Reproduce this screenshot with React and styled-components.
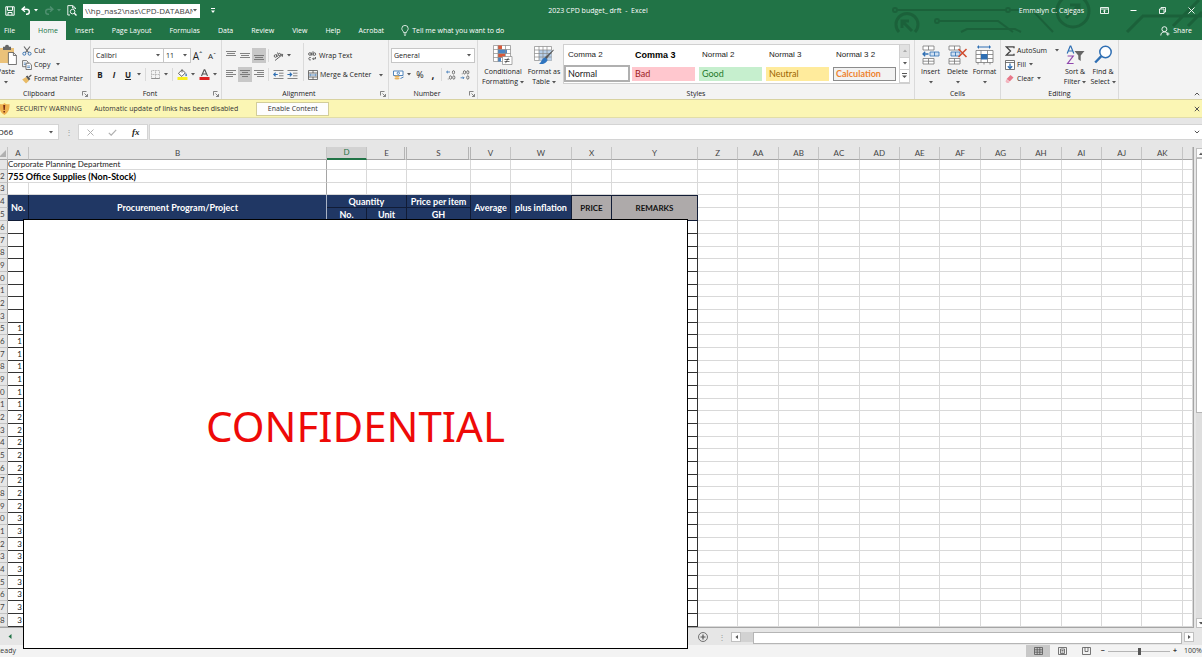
import React from 'react';
import styled, { createGlobalStyle, css } from 'styled-components';

const GlobalStyle = createGlobalStyle`
  * { box-sizing: border-box; }
  body {
    margin: 0;
    overflow: hidden;
    background: #e6e6e6;
    color: #222;
    font: 7px/10px 'Open Sans', 'Noto Sans', sans-serif;
  }
  button, input, select {
    font: inherit;
    color: inherit;
    margin: 0;
    padding: 0;
    border: 0;
    background: none;
    outline: 0;
    border-radius: 0;
  }
  svg { display: block; flex: none; }
`;

/* ---------- icons ---------- */

const Svg = ({ w, h, children, ...rest }) => (
  <svg width={w} height={h} viewBox={`0 0 ${w} ${h}`} fill="none" stroke="#555" aria-hidden="true" {...rest}>
    {children}
  </svg>
);

const Caret = ({ color = '#555' }) => (
  <Svg w={4} h={3} stroke="none">
    <path d="M0 0h4L2 2.6z" fill={color} />
  </Svg>
);

const Launcher = () => (
  <Svg w={6} h={6} strokeWidth=".7">
    <path d="M.5 4.5v-4h4M2.5 2.5l2.8 2.8M5.500 3v2.500H3" />
  </Svg>
);

const SaveIcon = () => (
  <Svg w={10} h={10} stroke="#fff">
    <path d="M.8.8h8.400v8.400H.8zM2.500 1v3.400h5V1M3 9V6.500h4V9" />
  </Svg>
);

const UndoIcon = ({ color = '#fff', flip }) => (
  <Svg w={10} h={9} stroke={color} strokeWidth="1.4" transform={flip ? 'scale(-1 1)' : undefined}>
    <path d="M4 .6L1 3.2l3 2.6M1.2 3.2h4.6a2.5 2.5 0 010 5H5" />
  </Svg>
);

const PreviewIcon = () => (
  <Svg w={10} h={11} stroke="#fff" strokeWidth=".9">
    <path d="M3 10H.8V.6h5L8.5 3v1M5.6.8V3h2.6" />
    <circle cx="5.6" cy="6.6" r="2.3" />
    <path d="M7.3 8.3l2.2 2.2" strokeWidth="1.3" />
  </Svg>
);

const BulbIcon = () => (
  <Svg w={8} h={11} stroke="#fff" strokeWidth=".8">
    <path d="M2.6 7.6C2.6 6 .8 5.6.8 3.6a3.2 3.2 0 016.4 0c0 2-1.8 2.4-1.8 4zM2.8 9h2.4M3.2 10.3h1.6" />
  </Svg>
);

const ShareIcon = () => (
  <Svg w={10} h={10} stroke="#fff" strokeWidth=".9">
    <circle cx="4.4" cy="3.2" r="2.5" />
    <path d="M.8 9.5c0-2.4 1.4-3.6 3.6-3.6 1 0 1.8.3 2.4.8M7.8 6.3v3.4M6.1 8h3.4" />
  </Svg>
);

const PasteIcon = () => (
  <Svg w={18} h={20} strokeWidth=".8">
    <path d="M0 3h14v15H0z" fill="#ebc27a" stroke="none" />
    <path d="M3 1.8h2a2 2 0 014 0h2V5H3z" fill="#666" stroke="none" />
    <path d="M8.4 7.5h5l3 3v9h-8z" fill="#fff" />
    <path d="M13.4 7.5v3h3" />
  </Svg>
);

const CutIcon = () => (
  <Svg w={10} h={10}>
    <path d="M2 .5l4.8 6.3M8 .5L3.2 6.8" stroke="#666" strokeWidth="1.1" />
    <circle cx="2.3" cy="7.7" r="1.5" stroke="#3f78b5" />
    <circle cx="7.6" cy="7.7" r="1.5" stroke="#3f78b5" />
  </Svg>
);

const CopyIcon = () => (
  <Svg w={10} h={10} strokeWidth=".8">
    <path d="M.6.6h4l1.4 1.5v4.6H.6z" fill="#fff" />
    <path d="M1.8 3h2M1.8 4.6h2" stroke="#3f78b5" />
    <path d="M4 3.2h3.6l1.8 1.6v4.7H4z" fill="#fff" />
    <path d="M5.2 6h2.8M5.2 7.6h2.8" stroke="#3f78b5" />
  </Svg>
);

const PainterIcon = () => (
  <Svg w={10} h={10} stroke="none">
    <path d="M.2 5.4L4 3l3 3.8-3 2.8z" fill="#e9bb66" />
    <path d="M3.8 2.6l1.6-1.2 3 3.6L6.8 6.4z" fill="#555" />
    <path d="M6.6 2.4L9 .4l.8.9-2.2 2.2z" fill="#555" />
  </Svg>
);

const BordersIcon = () => (
  <Svg w={9} h={9} stroke="#aaa" strokeWidth=".9">
    <path d="M.5.5h8v8h-8zM4.5.5v8M.5 4.5h8" strokeDasharray="1 .6" />
    <path d="M.3 8.5h8.4" stroke="#888" />
  </Svg>
);

const BucketIcon = () => (
  <Svg w={11} h={11} strokeWidth=".9">
    <path d="M5 .8L1.4 4.4l3.4 3 3.6-3.6zM5 .5v3" fill="#fff" />
    <path d="M9 4c.8 1.4 1.2 2 .8 2.7-.4.7-1.4.5-1.5-.3C8.2 5.7 9 4 9 4z" fill="#3f78b5" stroke="none" />
    <path d="M.5 8h10v3H.5z" fill="#f8ef1c" stroke="none" />
  </Svg>
);

const AlignIcon = ({ rows }) => (
  <Svg w={10} h={11} stroke="#666" strokeWidth=".8">
    {rows.map(([x1, x2, y]) => (
      <path key={y} d={`M${x1} ${y}H${x2}`} />
    ))}
  </Svg>
);

const OrientIcon = () => (
  <Svg w={11} h={10} strokeWidth=".9">
    <circle cx="2.5" cy="5" r="1.3" />
    <path d="M3.6 3.3l.8 2.8M4.5 1.5l1.4 3.4a1.3 1.3 0 10-.4-2.4M2 9.5l7.5-6M7.2 3.2l2.5.2-.5 2.5" />
  </Svg>
);

const IndentIcon = ({ right }) => (
  <Svg w={11} h={9} stroke="#777" strokeWidth=".9">
    <path d="M.5.5h10M6 3.200h4.500M6 5.800h4.500M.5 8.500h10" />
    <path d={right ? 'M.4 4.500h4M2.800 2.700l1.800 1.800-1.800 1.800' : 'M.8 4.500h4M2.600 2.700L.8 4.500l1.800 1.800'} stroke="#2f6fb3" strokeWidth="1.2" />
  </Svg>
);

const WrapIcon = () => (
  <Svg w={9} h={10} strokeWidth=".9">
    <circle cx="1.9" cy="3" r="1.3" />
    <path d="M3.4 1.5v3M5 .3v4.2" />
    <circle cx="6.4" cy="3.1" r="1.3" />
    <path d="M2.8 6.6a1.3 1.3 0 100 2.2M7.500 6v1.800H4.800M5.800 6.600L4.600 7.800l1.200 1.200" />
  </Svg>
);

const MergeIcon = () => (
  <Svg w={10} h={10} strokeWidth=".8">
    <path d="M.5.5h9v9h-9zM.5 3h9M.5 7h9M5 .5V3M5 7v2.5" />
    <path d="M1.6 5h6.8M2.8 4L1.6 5l1.2 1M7.2 4l1.2 1-1.2 1" stroke="#3f78b5" />
  </Svg>
);

const CurrencyIcon = () => (
  <Svg w={11} h={10} strokeWidth=".9">
    <path d="M.5 1h9.500v4.500H.5z" fill="#fff" stroke="#3f78b5" />
    <circle cx="5.3" cy="3.2" r="1.2" stroke="#3f78b5" />
    <ellipse cx="4" cy="6.4" rx="2.6" ry="1" fill="#ebb35b" stroke="none" />
    <ellipse cx="4" cy="8.5" rx="2.6" ry="1" fill="#ebb35b" stroke="none" />
    <path d="M10.5 7l-3 1.500" stroke="#3f78b5" />
  </Svg>
);

const DecimalIcon = ({ more }) => (
  <Svg w={10} h={10} strokeWidth=".8">
    {more ? (
      <path d="M4 2H.6M1.9.8L.6 2l1.3 1.200" stroke="#2f6fb3" />
    ) : (
      <path d="M.6 7.8H4M2.8 6.6L4 7.8 2.8 9" stroke="#2f6fb3" />
    )}
    <ellipse cx={more ? 7.5 : 4.5} cy="2.3" rx="1.1" ry="1.7" />
    <ellipse cx={more ? 4.5 : 7.8} cy={more ? 7.5 : 2.3} rx="1.1" ry="1.7" />
    <ellipse cx="7.8" cy="7.5" rx="1.1" ry="1.7" />
    <path d={more ? 'M1.8 9h.8' : 'M1.8 3.800h.8'} />
  </Svg>
);

const CondIcon = () => (
  <Svg w={20} h={20} strokeWidth=".7" stroke="#888">
    <path d="M.5.5h17v16H.5z" fill="#fff" />
    <path d="M5 .5h4v4H5zM5 8.500h7v4H5z" fill="#d8593a" stroke="none" />
    <path d="M5 4.500h9v4H5zM5 12.500h3v4H5z" fill="#4a86c5" stroke="none" />
    <path d="M.5 4.500h17M.5 8.500h17M.5 12.500h17M5 .5v16M12.500.5v16" />
    <path d="M9.500 11.500h9.500v8H9.500z" fill="#fff" />
    <path d="M11.500 14.500h5M11.500 16.500h5M15.500 12.800l-3 5.400" stroke="#333" />
  </Svg>
);

const TableIcon = () => (
  <Svg w={20} h={20} strokeWidth=".7" stroke="#888">
    <path d="M.5 1.500h17v14H.5z" fill="#fff" />
    <path d="M5 5h12.500v10.500H5z" fill="#b7d0ea" stroke="none" />
    <path d="M.5 5h17M.5 8.500h17M.5 12h17M5 1.500v14M9 1.500v14M13 1.500v14" />
    <path d="M19.500 5l-7.500 9-1-1.500z" fill="#555" stroke="#555" />
    <path d="M11.500 12.500l2 2.500c-1.500 4-5 4.200-8.500 4 2.500-1.500 2.500-6 6.500-6.500z" fill="#2f74bf" stroke="none" />
  </Svg>
);

const InsertIcon = () => (
  <Svg w={18} h={19} strokeWidth=".8" stroke="#777">
    <path d="M1 .5h11v4H1zM6.500.5v4M1 13h11v5.500H1zM6.500 13v5.500M1 15.700h11" fill="#fff" />
    <path d="M8 6.500h9v4H8zM12.500 6.500v4" fill="#cfe0f2" stroke="#2f6fb3" />
    <path d="M6.500 8.500H1M3.200 6.300L1 8.500l2.200 2.200" stroke="#2f6fb3" strokeWidth="1.3" />
  </Svg>
);

const DeleteIcon = () => (
  <Svg w={18} h={19} strokeWidth=".8" stroke="#777">
    <path d="M0 .5h11v4H0zM5.500.5v4M0 13h11v5.500H0zM5.500 13v5.500M0 15.700h11" fill="#fff" />
    <path d="M2 6.500h9v4H2zM6.500 6.500v4" fill="#cfe0f2" stroke="#2f6fb3" />
    <path d="M9.500 3.500l8 8M17.500 3.500l-8 8" stroke="#d04a2c" strokeWidth="1.5" />
  </Svg>
);

const FormatIcon = () => (
  <Svg w={19} h={19} strokeWidth=".8" stroke="#777">
    <path d="M2 1.500h14M3.500 0v3M14.500 0v3" stroke="#2f6fb3" strokeWidth="1" />
    <path d="M1 5h17v12H1zM1 9h17M1 13h17M6 5v12M12.500 5v12" fill="#fff" />
    <path d="M6 8.500h6.500V14H6z" fill="#2f6fb3" stroke="none" />
    <path d="M3 17v2M9 17v2M15 17v2" />
  </Svg>
);

const SigmaIcon = () => (
  <Svg w={10} h={10} stroke="#444" strokeWidth="1.3">
    <path d="M9 2.200V.8H1.200L5.500 5l-4.300 4.200H9V7.800" />
  </Svg>
);

const FillIcon = () => (
  <Svg w={10} h={10} strokeWidth=".8">
    <path d="M.5.5h9v9h-9zM.5 2.500h9" fill="#fff" />
    <path d="M5 3.500v5M2.800 6.200L5 8.500l2.200-2.300" stroke="#2f6fb3" strokeWidth="1.3" />
  </Svg>
);

const EraserIcon = () => (
  <Svg w={10} h={10} stroke="none">
    <path d="M5.500 1l3 2.600-3.700 4L1.600 5z" fill="#e8788a" />
    <path d="M1.400 5.300L4.500 8l-.8.9H1.800L.5 7.500z" fill="#f3b4be" />
  </Svg>
);

const SortIcon = () => (
  <Svg w={19} h={20} strokeWidth="1.2">
    <path d="M1.200 8.500L4.200 1h.6l3 7.500M2.200 6h4.600" stroke="#2f6fb3" />
    <path d="M1.600 11h5.600L1.600 18.500h6" stroke="#9047ad" />
    <path d="M8.500 6h10l-3.800 4.500V16l-2.400-1.800v-3.700z" fill="#666" stroke="none" />
  </Svg>
);

const FindIcon = () => (
  <Svg w={19} h={20} stroke="#2f6fb3">
    <circle cx="11.5" cy="7" r="5.7" strokeWidth="1.5" fill="#fff" />
    <path d="M7.300 11.200L1.200 17.500" strokeWidth="2.4" />
  </Svg>
);

const ShieldIcon = () => (
  <Svg w={10} h={12} stroke="none">
    <path d="M0 1c2 .6 3.500 0 4.500-1C5.500 1 7.500 1.600 9.500 1c.3 5-1 8.500-5 11C1 10 0 8 0 6z" fill="#eeb350" />
    <path d="M3.200 2h2l-.4 5H3.600zM3.400 8h1.600v1.600H3.400z" fill="#7b2d12" />
  </Svg>
);

const Circuit = styled.svg`
  position: absolute;
  top: 0;
  right: 0;
  opacity: 0.75;
`;

const CircuitArt = () => (
  <Circuit width="312" height="33" viewBox="890 0 312 33" fill="none" stroke="#1a5c37" strokeWidth="2" aria-hidden="true">
    <circle cx="895" cy="10" r="2" />
    <path d="M897 10h109M1010 10h22l21 22" />
    <circle cx="1008" cy="10" r="2" />
    <circle cx="937" cy="21" r="2" />
    <path d="M939 21h59l15 11M961 32l6-3h48l6 3" />
    <path d="M899 32a11 11 0 1116 0" strokeWidth="3" />
    <path d="M912 31l-9-9M902 28v-7h7" strokeWidth="3" />
    <circle cx="1073" cy="11" r="16" strokeWidth="3" />
    <path d="M1066 18l13-13M1079 14V5h-9" strokeWidth="3" />
    <path d="M1127 32l16-16h59M1173 26l26-26M1188 26l14-14" strokeWidth="3" />
  </Circuit>
);

/* ---------- title bar and tabs ---------- */

const Page = styled.div`
  min-height: 100vh;
  display: flex;
  flex-direction: column;
  overflow: hidden;
`;

const Header = styled.header`
  position: relative;
  background: #217346;
  color: #fff;
`;

const TitleBar = styled.div`
  position: relative;
  display: grid;
  grid-template-columns: 1fr auto 1fr;
  align-items: center;
  height: 21px;
`;

const QuickAccess = styled.div`
  display: flex;
  align-items: center;
  gap: 6px;
  padding-left: 5px;
`;

const PlainButton = styled.button`
  display: flex;
  align-items: center;
  justify-content: center;
  gap: 3px;
`;

const PathBox = styled.label`
  display: flex;
  align-items: center;
  width: 117px;
  height: 14px;
  padding: 0 3px 0 2px;
  background: #fff;
  color: #444;

  & > input {
    flex: 1;
    min-width: 0;
    font-size: 8px;
  }
`;

const DocTitle = styled.div`
  margin-right: 6px;
  white-space: pre;
`;

const WindowControls = styled.div`
  display: flex;
  justify-content: flex-end;
  align-items: center;
  margin-right: -4px;

  & > button {
    width: 29px;
    height: 20px;
  }
`;

const UserName = styled.span`
  margin-right: 6px;
`;

const TabRow = styled.nav`
  position: relative;
  display: flex;
  height: 19px;
`;

const Tab = styled.button`
  padding: 0 9px;
  ${props =>
    props.$first &&
    css`
      padding: 0 15px 0 4px;
    `};
  ${props =>
    props.$active &&
    css`
      background: #f3f3f3;
      color: #217346;
      padding: 0 8px;
    `};
`;

const TellMe = styled(PlainButton)`
  margin-left: 8px;
`;

const ShareButton = styled(PlainButton)`
  margin-left: auto;
  padding-right: 10px;
`;

/* ---------- ribbon ---------- */

const Ribbon = styled.section`
  position: relative;
  display: flex;
  height: 60px;
  background: #f3f3f3;
  border-bottom: 1px solid #d8d2a0;
`;

const Group = styled.div`
  display: flex;
  flex: none;
  flex-direction: column;
  width: ${props => props.$width}px;
  padding-top: 3px;
  border-right: 1px solid #dadada;
`;

const GroupBody = styled.div`
  display: flex;
  flex: 1;
  padding-left: ${props => props.$pad || 0}px;
  gap: ${props => props.$gap || 0}px;
`;

const GroupLabel = styled.div`
  position: relative;
  height: 11px;
  padding-top: 1px;
  padding-right: ${props => (props.$launcher ? 12 : 0)}px;
  text-align: center;

  & > button {
    position: absolute;
    right: 2px;
    top: 3px;
  }
`;

const Rows = styled.div`
  display: flex;
  flex-direction: column;
  padding-top: 3px;
`;

const ToolRow = styled.div`
  display: flex;
  align-items: center;
  height: 19px;
`;

const Tool = styled.button`
  display: flex;
  align-items: center;
  justify-content: center;
  width: ${props => props.$width || 14}px;
  height: 15px;
  font-size: ${props => props.$size || 8}px;
  ${props => props.$on && 'background: #c8c8c8;'};
`;

const Divider = styled.span`
  width: 1px;
  height: ${props => props.$height || 13}px;
  margin: 0 ${props => props.$space || 2}px;
  background: #dadada;
`;

const Combo = styled.label`
  position: relative;
  display: flex;
  align-items: center;
  width: ${props => props.$width}px;
  height: 15px;
  margin-right: -1px;
  border: 1px solid #c6c6c6;
  background: #fff;

  & > select {
    flex: 1;
    width: 100%;
    padding-left: 2px;
    appearance: none;
  }

  & > svg {
    position: absolute;
    right: 3px;
    pointer-events: none;
  }
`;

const TextTool = styled.button`
  display: flex;
  align-items: center;
  gap: 2px;
  height: ${props => (props.$tall ? 19 : 14)}px;
  padding-top: 1px;
  white-space: nowrap;

  & > svg:last-child:not(:first-child) {
    margin-left: ${props => props.$caretGap || 1}px;
  }
`;

const BigTool = styled.button`
  display: flex;
  flex: none;
  flex-direction: column;
  align-items: center;
  width: ${props => props.$width}px;
  padding-top: 2px;
  white-space: nowrap;

  & > span {
    display: flex;
    align-items: center;
    gap: 2px;
    min-height: 10px;
  }

  & > svg {
    height: 20px;
    margin-bottom: 2px;
    overflow: visible;
  }
`;

const PasteTool = styled(BigTool)`
  align-items: flex-start;

  & > span {
    margin-left: -3px;
  }
  & > span:last-child {
    margin-left: 4px;
  }
`;

const Gallery = styled.div`
  display: grid;
  grid-template-columns: repeat(5, 67px) 10px;
  grid-template-rows: 19px 19px;
  align-items: center;
  height: 40px;
  margin-top: 1px;
  border: 1px solid #d0d0d0;
  background: #fff;
`;

const StyleCell = styled.button`
  height: 14px;
  margin: 0 3px 0 1px;
  padding-left: 3px;
  text-align: left;
  font-family: Lato, 'Open Sans', sans-serif;
  font-size: ${props => (props.$arial ? 8 : 9)}px;
  ${props => props.$arial && "font-family: 'Liberation Sans', Arial, sans-serif; color: #222;"};
  ${props => props.$bold && 'font-size: 9px; font-weight: bold; color: #000;'};
  ${props => props.$fill && `background: ${props.$fill};`};
  ${props => props.$color && `color: ${props.$color};`};
  ${props => props.$boxed && 'border: 1px solid #8c8c8c; font-weight: bold; padding-left: 2px;'};
  ${props => props.$chosen && 'height: 17px; margin: 0 1px 0 0; border: 2px solid #b0b0b0; padding-left: 2px;'};
`;

const GalleryScroll = styled.div`
  grid-column: 6;
  grid-row: 1 / 3;
  display: grid;
  grid-template-rows: repeat(3, 1fr);
  height: 38px;
  border-left: 1px solid #d0d0d0;

  & > button {
    display: flex;
    align-items: center;
    justify-content: center;
    border-bottom: 1px solid #d0d0d0;
  }
  & > button:first-child {
    background: #e1e1e1;
  }
`;

const Collapse = styled.button`
  position: absolute;
  right: 2px;
  bottom: 3px;
`;

/* ---------- message bar and formula bar ---------- */

const MessageBar = styled.div`
  display: flex;
  align-items: center;
  height: 18px;
  padding-right: 2px;
  background: #fbf6b4;
  border-bottom: 1px solid #e2dea8;
  color: #333;

  & > strong {
    margin: 0 12px 0 6px;
    font-weight: normal;
  }
  & > button:last-child {
    margin-left: auto;
  }
`;

const EnableButton = styled.button`
  height: 14px;
  width: 73px;
  margin-left: 18px;
  border: 1px solid #d2cd9a;
  background: #fdfdfd;
`;

const FormulaBar = styled.div`
  display: flex;
  align-items: center;
  height: 29px;
  padding-bottom: 1px;
`;

const NameBox = styled.label`
  display: flex;
  align-items: center;
  width: 59px;
  height: 16px;
  padding-right: 5px;
  border: 1px solid #d4d4d4;
  border-left: 0;
  background: #fff;
  font-size: 8px;

  & > input {
    flex: 1;
    min-width: 0;
    margin-left: -2px;
  }
`;

const Dots = styled.span`
  width: 19px;
  text-align: center;
  font-size: 8px;
  color: #999;
`;

const FormulaButtons = styled.div`
  display: flex;
  justify-content: space-around;
  align-items: center;
  width: 70px;
  height: 16px;
  margin-right: 1px;
  border: 1px solid #d4d4d4;
  background: #fff;

  & > button {
    width: 22px;
    display: flex;
    justify-content: center;
  }
  & > button:last-child {
    font: italic bold 9px/12px 'Liberation Serif', serif;
  }
`;

const FormulaInput = styled.label`
  display: flex;
  flex: 1;
  align-items: center;
  height: 16px;
  padding-right: 2px;
  border: 1px solid #d4d4d4;
  border-right: 0;
  background: #fff;

  & > input {
    flex: 1;
  }
`;

/* ---------- sheet ---------- */

const SheetArea = styled.main`
  position: relative;
  display: flex;
`;

const Sheet = styled.table`
  flex: 1;
  width: 100%;
  table-layout: fixed;
  border-collapse: separate;
  border-spacing: 0;
  background: #fff;
  border-right: 1px solid #a5a5a5;
  border-bottom: 1px solid #a5a5a5;
  font: 8px/9px Lato, 'Open Sans', sans-serif;

  th,
  td {
    padding: 0;
    overflow: hidden;
    white-space: nowrap;
  }
`;

const ColHead = styled.th`
  height: 13px;
  background: #e6e6e6;
  border-right: 1px solid #c4c4c4;
  border-bottom: 1px solid #a5a5a5;
  font-weight: normal;
  color: #444;
  ${props => props.$double && 'border-right: 3px double #b4b4b4; padding-left: 2px !important;'};
  ${props => props.$picked && 'background: #d2d2d2; color: #217346; border-bottom: 2px solid #217346;'};
`;

const Row = styled.tr`
  height: ${props => props.$height}px;
`;

const RowHead = styled.th`
  background: #e6e6e6;
  border-right: 1px solid #a5a5a5;
  border-bottom: 1px solid #c4c4c4;
  font-weight: normal;
  text-align: left;
  color: #444;
`;

const Cell = styled.td`
  border-right: 1px solid #d9d9d9;
  border-bottom: 1px solid #d9d9d9;
  ${props => props.$freeze && 'border-right-color: #a5a5a5;'};
  ${props => props.$ruled && 'border-right-color: #333; border-bottom-color: #333;'};
  ${props => props.$index && 'text-align: right; padding-right: 6px !important; color: #222;'};
  ${props => props.$strong && 'font-size: 9px; font-weight: bold; color: #000;'};
`;

const HeadCell = styled.th`
  font-size: 9px;
  background: ${props => (props.$gray ? '#aeaaaa' : '#203764')};
  color: ${props => (props.$gray ? '#111' : '#fff')};
  border-right: 1px solid #111c36;
  border-bottom: 1px solid #111c36;
  border-top: ${props => (props.$gray ? '1px solid #111c36' : 0)};
  ${props => props.$gray && 'font-size: 8px;'};
  ${props => props.$freeze && 'border-right-color: #a9b3c6;'};
`;

const VScroll = styled.div`
  display: flex;
  flex: none;
  flex-direction: column;
  width: 8px;
  padding: 1px 0 0 2px;
  background: #e6e6e6;
`;

const ScrollButton = styled.button`
  display: flex;
  flex: none;
  align-items: center;
  justify-content: center;
  width: 10px;
  height: 10px;
  border: 1px solid #c0c0c0;
  background: #fdfdfd;
`;

const VTrack = styled.div`
  flex: 1;
  background: #dedede;

  &::before {
    content: '';
    display: block;
    width: 10px;
    height: 55%;
    border: 1px solid #b5b5b5;
    background: #fff;
  }
`;

const Cover = styled.div`
  position: absolute;
  z-index: 2;
  top: 72px;
  left: 23px;
  width: 665px;
  height: 430px;
  display: flex;
  align-items: center;
  justify-content: center;
  padding-bottom: 16px;
  border: 1px solid #000;
  background: #fff;
  color: #ee0a08;
  font-family: 'Noto Sans', 'Open Sans', sans-serif;
  font-size: 42px;
  line-height: 44px;
`;

const SheetBar = styled.div`
  display: flex;
  align-items: center;
  height: 17px;
  padding-right: 8px;
  background: #e6e6e6;
`;

const TabArea = styled.div`
  display: flex;
  justify-content: space-between;
  align-items: center;
  width: 712px;
  padding: 0 4px 0 8px;
`;

const HTrack = styled.div`
  flex: 1;
  height: 10px;
  margin-right: 2px;
  padding-left: 12px;
  background: #d2d2d2;

  &::before {
    content: '';
    display: block;
    height: 10px;
    border: 1px solid #b5b5b5;
    background: #fff;
  }
`;

const StatusBar = styled.footer`
  display: flex;
  align-items: center;
  flex: 1;
  min-height: 12px;
  background: #f3f3f3;
  color: #333;

  & > span:first-child {
    flex: 1;
    margin-left: -4px;
  }
`;

const ViewButton = styled.button`
  display: flex;
  align-items: center;
  justify-content: center;
  width: 24px;
  height: 12px;
  background: ${props => (props.$on ? '#c8c8c8' : 'none')};
`;

const ZoomButton = styled.button`
  width: 10px;
  font-weight: bold;
`;

const ZoomSlider = styled.input`
  width: 62px;
  height: 10px;
  appearance: none;

  &::-webkit-slider-runnable-track {
    height: 1px;
    background: #b5b5b5;
  }
  &::-webkit-slider-thumb {
    appearance: none;
    width: 3px;
    height: 7px;
    margin-top: -3px;
    background: #555;
  }
`;

const ZoomValue = styled.span`
  width: 18px;
  margin-left: 4px;
`;

const tabs = ['Insert', 'Page Layout', 'Formulas', 'Data', 'Review', 'View', 'Help', 'Acrobat'];

const styleCells = [
  { name: 'Comma 2', $arial: true },
  { name: 'Comma 3', $arial: true, $bold: true },
  { name: 'Normal 2', $arial: true },
  { name: 'Normal 3', $arial: true },
  { name: 'Normal 3 2', $arial: true },
  { name: 'Normal', $chosen: true },
  { name: 'Bad', $fill: '#ffc7ce', $color: '#9c1c24' },
  { name: 'Good', $fill: '#c6efce', $color: '#1f7a2c' },
  { name: 'Neutral', $fill: '#ffeb9c', $color: '#9c6500' },
  { name: 'Calculation', $fill: '#f2f2f2', $color: '#ee8330', $boxed: true }
];

const columns = [
  ['A', 21],
  ['B', 298],
  ['D', 40],
  ['E', 40],
  ['S', 64],
  ['V', 40],
  ['W', 61],
  ['X', 40],
  ['Y', 86]
];
const wideColumns = ['Z', 'AA', 'AB', 'AC', 'AD', 'AE', 'AF', 'AG', 'AH', 'AI', 'AJ', 'AK'];

// row 14 is hidden in the sheet
const dataRows = Array.from({ length: 33 }, (_, i) => i + 6).filter(n => n !== 14);

const indexFor = n => {
  if (n < 15) return '';
  if (n < 22) return '1';
  return n < 30 ? '2' : '3';
};

const blanks = (count, props = {}) => Array.from({ length: count }, (_, i) => <Cell key={i} {...props} />);

// the header column is one digit wide
const Head = ({ n }) => <RowHead scope="row">{n > 1 ? n % 10 : ''}</RowHead>;

const RibbonGroup = ({ label, width, launcher, pad, gap, children }) => (
  <Group $width={width}>
    <GroupBody $pad={pad} $gap={gap}>
      {children}
    </GroupBody>
    <GroupLabel $launcher={launcher}>
      {label}
      {launcher && (
        <button aria-label={`${label} settings`}>
          <Launcher />
        </button>
      )}
    </GroupLabel>
  </Group>
);

const TopArea = () => (
  <Header>
    <CircuitArt />
    <TitleBar>
      <QuickAccess>
        <PlainButton aria-label="Save"><SaveIcon /></PlainButton>
        <PlainButton aria-label="Undo">
          <UndoIcon />
          <Caret color="#fff" />
        </PlainButton>
        <PlainButton aria-label="Redo">
          <UndoIcon color="#4f9070" flip />
          <Caret color="#4f9070" />
        </PlainButton>
        <PlainButton aria-label="Print preview"><PreviewIcon /></PlainButton>
        <PathBox>
          <input aria-label="Document location" defaultValue="\\hp_nas2\nas\CPD-DATABANK" />
          <Caret />
        </PathBox>
        <PlainButton aria-label="Customize">
          <Svg w={14} h={6} stroke="none">
            <path d="M5 0h4v1H5zM5 2.500h4L7 5z" fill="#fff" />
          </Svg>
        </PlainButton>
      </QuickAccess>
      <DocTitle>{'2023 CPD budget_ drft  -  Excel'}</DocTitle>
      <WindowControls>
        <UserName>Emmalyn C. Cajegas</UserName>
        <PlainButton aria-label="Ribbon options">
          <Svg w={9} h={7} stroke="#fff" strokeWidth=".9">
            <path d="M.5.5h8v6h-8zM.5 2h8M4.500 6V3.200M3.200 4.400l1.300-1.300 1.300 1.300" />
          </Svg>
        </PlainButton>
        <PlainButton aria-label="Minimize">
          <Svg w={7} h={7} stroke="#fff"><path d="M.5 3.500h6" /></Svg>
        </PlainButton>
        <PlainButton aria-label="Restore">
          <Svg w={7} h={7} stroke="#fff" strokeWidth=".9"><path d="M.5 2h4.500v4.500H.5zM2 2V.5h4.500V5H5" /></Svg>
        </PlainButton>
        <PlainButton aria-label="Close">
          <Svg w={7} h={7} stroke="#fff" strokeWidth=".9"><path d="M.5.5l6 6M6.500.5l-6 6" /></Svg>
        </PlainButton>
      </WindowControls>
    </TitleBar>
    <TabRow>
      <Tab $first>File</Tab>
      <Tab $active>Home</Tab>
      {tabs.map(name => (
        <Tab key={name}>{name}</Tab>
      ))}
      <TellMe>
        <BulbIcon />
        Tell me what you want to do
      </TellMe>
      <ShareButton>
        <ShareIcon />
        Share
      </ShareButton>
    </TabRow>
  </Header>
);

const RibbonArea = () => (
  <Ribbon>
    <RibbonGroup label="Clipboard" width={91} launcher gap={3}>
      <PasteTool $width={19}>
        <PasteIcon />
        <span>Paste</span>
        <span><Caret /></span>
      </PasteTool>
      <div>
        <TextTool><CutIcon />Cut</TextTool>
        <TextTool $caretGap={4}><CopyIcon />Copy<Caret /></TextTool>
        <TextTool><PainterIcon />Format Painter</TextTool>
      </div>
    </RibbonGroup>

    <RibbonGroup label="Font" width={131} launcher pad={2}>
      <Rows>
        <ToolRow>
          <Combo $width={71}>
            <select aria-label="Font"><option>Calibri</option></select>
            <Caret />
          </Combo>
          <Combo $width={28}>
            <select aria-label="Font size"><option>11</option></select>
            <Caret />
          </Combo>
          <Tool $width={15} $size={10}>A<sup>ˆ</sup></Tool>
          <Tool $width={14} $size={8}>A<sup>ˇ</sup></Tool>
        </ToolRow>
        <ToolRow>
          <Tool aria-label="Bold"><b>B</b></Tool>
          <Tool aria-label="Italic"><b><i>I</i></b></Tool>
          <Tool aria-label="Underline"><b><u>U</u></b></Tool>
          <Tool $width={8} aria-label="Underline styles"><Caret /></Tool>
          <Divider />
          <Tool aria-label="Borders"><BordersIcon /></Tool>
          <Tool $width={8} aria-label="Border styles"><Caret /></Tool>
          <Divider />
          <Tool aria-label="Fill colour"><BucketIcon /></Tool>
          <Tool $width={8} aria-label="Fill colours"><Caret /></Tool>
          <Tool aria-label="Font colour">
            <Svg w={11} h={11} strokeWidth="1.1">
              <path d="M2.500 7L5.200.8h.6L8.500 7M3.600 5h3.800" />
              <path d="M.5 8h10v3H.5z" fill="#d22" stroke="none" />
            </Svg>
          </Tool>
          <Tool $width={8} aria-label="Font colours"><Caret /></Tool>
        </ToolRow>
      </Rows>
    </RibbonGroup>

    <RibbonGroup label="Alignment" width={167} launcher pad={2}>
      <Rows>
        <ToolRow>
          <Tool aria-label="Top align"><AlignIcon rows={[[0, 10, 1.5], [1, 9, 3.5], [0, 10, 5.5]]} /></Tool>
          <Tool aria-label="Middle align"><AlignIcon rows={[[0, 10, 3.5], [1, 9, 5.5], [0, 10, 7.5]]} /></Tool>
          <Tool aria-label="Bottom align" $on><AlignIcon rows={[[0, 10, 5.5], [1, 9, 7.5], [0, 10, 9.5]]} /></Tool>
          <Divider />
          <Tool aria-label="Orientation"><OrientIcon /></Tool>
          <Tool $width={8} aria-label="Orientation options"><Caret /></Tool>
        </ToolRow>
        <ToolRow>
          <Tool aria-label="Align left"><AlignIcon rows={[[0, 10, 1.5], [0, 7, 3.5], [0, 10, 5.5], [0, 7, 7.5]]} /></Tool>
          <Tool aria-label="Center" $on><AlignIcon rows={[[0, 10, 1.5], [2, 8, 3.5], [0, 10, 5.5], [2, 8, 7.5]]} /></Tool>
          <Tool aria-label="Align right"><AlignIcon rows={[[0, 10, 1.5], [3, 10, 3.5], [0, 10, 5.5], [3, 10, 7.5]]} /></Tool>
          <Divider />
          <Tool aria-label="Decrease indent"><IndentIcon /></Tool>
          <Tool aria-label="Increase indent"><IndentIcon right /></Tool>
        </ToolRow>
      </Rows>
      <Divider $height={38} $space={4} />
      <Rows>
        <TextTool $tall><WrapIcon />Wrap Text</TextTool>
        <TextTool $tall $caretGap={6}><MergeIcon />Merge &amp; Center<Caret /></TextTool>
      </Rows>
    </RibbonGroup>

    <RibbonGroup label="Number" width={89} launcher pad={2}>
      <Rows>
        <ToolRow>
          <Combo $width={84}>
            <select aria-label="Number format"><option>General</option></select>
            <Caret />
          </Combo>
        </ToolRow>
        <ToolRow>
          <Tool aria-label="Accounting format"><CurrencyIcon /></Tool>
          <Tool $width={8} aria-label="Currencies"><Caret /></Tool>
          <Tool $size={9}>%</Tool>
          <Tool $width={12} $size={10}><b>,</b></Tool>
          <Divider />
          <Tool aria-label="Increase decimal"><DecimalIcon more /></Tool>
          <Tool aria-label="Decrease decimal"><DecimalIcon /></Tool>
        </ToolRow>
      </Rows>
    </RibbonGroup>

    <RibbonGroup label="Styles" width={437} pad={3}>
      <BigTool $width={44}>
        <CondIcon />
        <span>Conditional</span>
        <span>Formatting <Caret /></span>
      </BigTool>
      <BigTool $width={38}>
        <TableIcon />
        <span>Format as</span>
        <span>Table <Caret /></span>
      </BigTool>
      <Gallery>
        {styleCells.map(({ name, ...look }) => (
          <StyleCell key={name} {...look}>{name}</StyleCell>
        ))}
        <GalleryScroll>
          <button aria-label="Previous styles"><Svg w={4} h={3} stroke="none"><path d="M0 3h4L2 .4z" fill="#aaa" /></Svg></button>
          <button aria-label="Next styles"><Caret /></button>
          <button aria-label="More styles"><Svg w={5} h={6} stroke="none"><path d="M0 0h5v1H0zM0 2.500h5L2.500 5z" fill="#555" /></Svg></button>
        </GalleryScroll>
      </Gallery>
    </RibbonGroup>

    <RibbonGroup label="Cells" width={86} pad={2}>
      <BigTool $width={27}><InsertIcon /><span>Insert</span><span><Caret /></span></BigTool>
      <BigTool $width={27}><DeleteIcon /><span>Delete</span><span><Caret /></span></BigTool>
      <BigTool $width={27}><FormatIcon /><span>Format</span><span><Caret /></span></BigTool>
    </RibbonGroup>

    <RibbonGroup label="Editing" width={118} pad={4} gap={4}>
      <div>
        <TextTool $caretGap={6}><SigmaIcon />AutoSum<Caret /></TextTool>
        <TextTool><FillIcon />Fill<Caret /></TextTool>
        <TextTool><EraserIcon />Clear<Caret /></TextTool>
      </div>
      <BigTool $width={24}><SortIcon /><span>Sort &amp;</span><span>Filter <Caret /></span></BigTool>
      <BigTool $width={24}><FindIcon /><span>Find &amp;</span><span>Select <Caret /></span></BigTool>
    </RibbonGroup>

    <Collapse aria-label="Collapse ribbon">
      <Svg w={6} h={4}><path d="M.8 3.200L3 1l2.200 2.200" /></Svg>
    </Collapse>
  </Ribbon>
);

const SheetTable = () => (
  <Sheet>
    <colgroup>
      <col width="8" />
      {columns.map(([name, width]) => (
        <col key={name} width={width} />
      ))}
      {wideColumns.map(name => (
        <col key={name} />
      ))}
      <col width="10" />
    </colgroup>
    <thead>
      <tr>
        <ColHead aria-label="Select all">
          <Svg w={6} h={8} stroke="none"><path d="M6 1v7H-1z" fill="#b0b0b0" /></Svg>
        </ColHead>
        {columns.map(([name]) => (
          <ColHead key={name} scope="col" $picked={name === 'D'} $double={name === 'E' || name === 'S'}>
            {name}
          </ColHead>
        ))}
        {wideColumns.map(name => (
          <ColHead key={name} scope="col">{name}</ColHead>
        ))}
        <ColHead />
      </tr>
    </thead>
    <tbody>
      <Row $height={10}>
        <Head n={1} />
        <Cell colSpan={2} $freeze>Corporate Planning Department</Cell>
        {blanks(20)}
      </Row>
      <Row $height={13}>
        <Head n={2} />
        <Cell colSpan={2} $freeze $strong>755 Office Supplies (Non-Stock)</Cell>
        {blanks(20)}
      </Row>
      <Row $height={12}>
        <Head n={3} />
        <Cell />
        <Cell $freeze />
        {blanks(20)}
      </Row>
      <Row $height={13}>
        <Head n={4} />
        <HeadCell rowSpan={2}>No.</HeadCell>
        <HeadCell rowSpan={2} $freeze>Procurement Program/Project</HeadCell>
        <HeadCell colSpan={2}>Quantity</HeadCell>
        <HeadCell>Price per item</HeadCell>
        <HeadCell rowSpan={2}>Average</HeadCell>
        <HeadCell rowSpan={2}>plus inflation</HeadCell>
        <HeadCell rowSpan={2} $gray>PRICE</HeadCell>
        <HeadCell rowSpan={2} $gray>REMARKS</HeadCell>
        {blanks(13)}
      </Row>
      <Row $height={13}>
        <Head n={5} />
        <HeadCell>No.</HeadCell>
        <HeadCell>Unit</HeadCell>
        <HeadCell>GH</HeadCell>
        {blanks(13)}
      </Row>
      {dataRows.map((n, i) => (
        <Row key={n} $height={i % 3 === 2 ? 12 : 13}>
          <Head n={n} />
          <Cell $ruled $index>{indexFor(n)}</Cell>
          {blanks(8, { $ruled: true })}
          {blanks(13)}
        </Row>
      ))}
    </tbody>
  </Sheet>
);

const App = () => (
  <Page>
    <GlobalStyle />
    <TopArea />
    <RibbonArea />
    <MessageBar>
      <ShieldIcon />
      <strong>SECURITY WARNING</strong>
      <span>Automatic update of links has been disabled</span>
      <EnableButton>Enable Content</EnableButton>
      <button aria-label="Dismiss">
        <Svg w={6} h={6}><path d="M.8.8l4.400 4.400M5.200.8L.8 5.200" /></Svg>
      </button>
    </MessageBar>
    <FormulaBar>
      <NameBox>
        <input aria-label="Name box" defaultValue="D66" />
        <Caret />
      </NameBox>
      <Dots>⋮</Dots>
      <FormulaButtons>
        <button aria-label="Cancel"><Svg w={7} h={7} stroke="#b0b0b0"><path d="M.5.5l6 6M6.500.5l-6 6" /></Svg></button>
        <button aria-label="Enter"><Svg w={9} h={7} stroke="#b0b0b0" strokeWidth="1.2"><path d="M.8 3.800l2.400 2.400L8.200.8" /></Svg></button>
        <button aria-label="Insert function">fx</button>
      </FormulaButtons>
      <FormulaInput>
        <input aria-label="Formula" />
        <Svg w={6} h={4}><path d="M.8.8L3 3 5.200.8" /></Svg>
      </FormulaInput>
    </FormulaBar>
    <SheetArea>
      <SheetTable />
      <VScroll>
        <ScrollButton aria-label="Scroll up"><Svg w={4} h={3} stroke="none"><path d="M0 3h4L2 .4z" fill="#555" /></Svg></ScrollButton>
        <VTrack />
        <ScrollButton aria-label="Scroll down"><Caret /></ScrollButton>
      </VScroll>
      <Cover>CONFIDENTIAL</Cover>
    </SheetArea>
    <SheetBar>
      <TabArea>
        <button aria-label="Previous sheet"><Svg w={4} h={5} stroke="none"><path d="M3.500 0v5L.5 2.500z" fill="#217346" /></Svg></button>
        <button aria-label="New sheet">
          <Svg w={10} h={10} strokeWidth=".8"><circle cx="5" cy="5" r="4.5" /><path d="M5 2.500v5M2.500 5h5" strokeWidth="1.2" /></Svg>
        </button>
      </TabArea>
      <Dots>⋮</Dots>
      <ScrollButton aria-label="Scroll left"><Svg w={3} h={4} stroke="none"><path d="M3 0v4L.4 2z" fill="#555" /></Svg></ScrollButton>
      <HTrack />
      <ScrollButton aria-label="Scroll right"><Svg w={3} h={4} stroke="none"><path d="M0 0v4l2.600-2z" fill="#555" /></Svg></ScrollButton>
    </SheetBar>
    <StatusBar>
      <span>Ready</span>
      <ViewButton $on aria-label="Normal view">
        <Svg w={9} h={8} strokeWidth=".8"><path d="M.5.5h8v7h-8zM.5 2.800h8M.5 5.200h8M3.200.5v7M5.800.5v7" /></Svg>
      </ViewButton>
      <ViewButton aria-label="Page layout view">
        <Svg w={9} h={8} strokeWidth=".8"><path d="M.5.5h8v7h-8zM2.500 2h4v4.500h-4zM3.500 3.500h2M3.500 5h2" /></Svg>
      </ViewButton>
      <ViewButton aria-label="Page break view">
        <Svg w={9} h={8} strokeWidth=".8"><path d="M.5.5h8v7h-8zM3 .5v4h3v-4" /></Svg>
      </ViewButton>
      <ZoomButton>−</ZoomButton>
      <ZoomSlider type="range" aria-label="Zoom" defaultValue="50" />
      <ZoomButton>+</ZoomButton>
      <ZoomValue>100%</ZoomValue>
    </StatusBar>
  </Page>
);

export default App;
